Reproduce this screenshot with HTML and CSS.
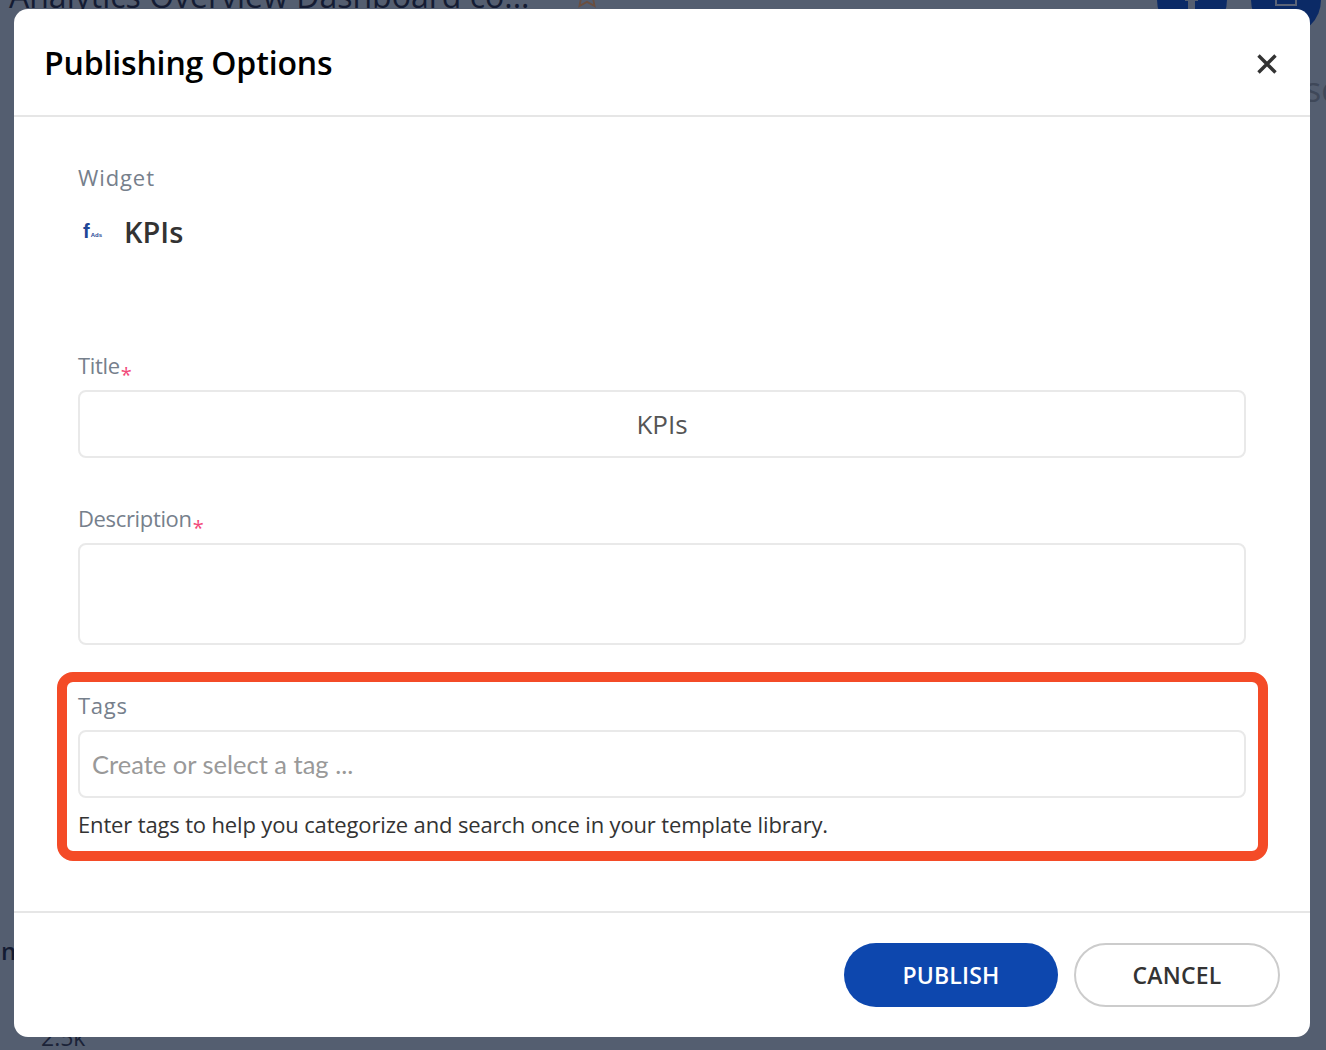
FILE: index.html
```html
<!DOCTYPE html>
<html lang="en">
<head>
<meta charset="utf-8">
<title>Publishing Options</title>
<link rel="stylesheet" href="styles.css">
</head>
<body>
<div class="backdrop">
  <span class="bg-title">Analytics Overview Dashboard co...</span>
  <svg class="bg-star" width="28" height="28" viewBox="0 0 20 20"><path d="M10 1.500l2.600 5.600 6 .7-4.400 4.100 1.200 6-5.400-3-5.400 3 1.200-6L1.400 7.800l6-.7z" fill="none" stroke="#6a4f40" stroke-width="1.300"/></svg>
  <span class="bg-circle bg-circle-a"><span class="glyph-plus"></span></span>
  <span class="bg-circle bg-circle-b"><span class="glyph-box"></span></span>
  <span class="bg-s">sc</span>
  <span class="bg-an">an</span>
  <span class="bg-num">2.5k</span>
</div>
<main class="modal">
  <header class="modal-head">
    <h1 class="modal-title">Publishing Options</h1>
    <svg class="close" width="20" height="20" viewBox="0 0 20 20" aria-label="Close"><path d="M1.500 1.500l17 17M18.500 1.500l-17 17" stroke="#333" stroke-width="3.400" fill="none"/></svg>
  </header>
  <div class="modal-body">
    <div class="widget">
      <div class="label label-widget">Widget</div>
      <div class="widget-row">
        <span class="widget-icon"><span class="icon-f">f</span><span class="icon-ads">Ads</span></span>
        <span class="widget-name">KPIs</span>
      </div>
    </div>
    <div class="field field-title">
      <div class="label">Title<span class="req">*</span></div>
      <div class="input input-center">KPIs</div>
    </div>
    <div class="field field-desc">
      <div class="label">Description<span class="req">*</span></div>
      <div class="input textarea"></div>
    </div>
    <div class="field field-tags">
      <div class="label label-tags">Tags</div>
      <div class="input placeholder">Create or select a tag ...</div>
      <p class="help">Enter tags to help you categorize and search once in your template library.</p>
      <div class="highlight"></div>
    </div>
  </div>
  <footer class="modal-foot">
    <button class="btn btn-primary">PUBLISH</button>
    <button class="btn btn-ghost">CANCEL</button>
  </footer>
</main>
</body>
</html>
```
FILE: styles.css
```css
* { box-sizing: border-box; }
html, body { margin: 0; height: 100%; }
body {
  position: relative;
  width: 1326px;
  height: 1050px;
  overflow: hidden;
  background: #545e70;
  font-family: "Open Sans", "Noto Sans", sans-serif;
}
.backdrop { position: absolute; inset: 0; color: #141c33; }
.backdrop > * { position: absolute; }
.bg-title { left: 9px; top: -24px; font: 32px/40px "Open Sans", sans-serif; white-space: nowrap; }
.bg-star { left: 573px; top: -19px; }
.bg-circle { width: 70px; height: 70px; border-radius: 50%; background: #0b2a66; top: -35px; }
.bg-circle-a { left: 1157px; }
.bg-circle-b { left: 1251px; }
.glyph-plus { position: absolute; left: 31px; top: 25px; width: 7px; height: 24px; background: #545e70; }
.glyph-plus::before { content: ""; position: absolute; left: -3px; top: 9px; width: 13px; height: 2px; background: #545e70; }
.glyph-box { position: absolute; left: 24px; top: 21px; width: 22px; height: 20px; border: 2px solid #5b6478; }
.bg-s { left: 1305px; top: 69px; font: 34px/40px "Open Sans", sans-serif; color: #3f4859; }
.bg-an { left: -13px; top: 936px; font: 600 24px/30px "Open Sans", sans-serif; }
.bg-num { left: 41px; top: 1024px; font: 23px/26px "Open Sans", sans-serif; color: #1b2338; }

.modal {
  position: absolute;
  left: 14px;
  top: 9px;
  width: 1296px;
  height: 1028px;
  background: #fff;
  border-radius: 14px;
  display: flex;
  flex-direction: column;
}
.modal-head {
  height: 108px;
  flex: none;
  border-bottom: 2px solid #e6e6e6;
  padding: 0 33px 0 30px;
  display: flex;
  align-items: center;
  justify-content: space-between;
}
.modal-title { margin: 2px 0 0; font-size: 32px; font-weight: 600; color: #000; letter-spacing: -0.15px; line-height: 40px; }
.close { margin-top: 4px; }
.modal-body { flex: 1; padding: 45px 64px 0; }
.label { font-size: 22px; line-height: 30px; color: #76808c; letter-spacing: -0.35px; }
.label-widget { letter-spacing: 0.9px; }
.label-tags { letter-spacing: 0.7px; }
.req { color: #f2497a; position: relative; top: 8px; margin-left: 1px; font-size: 20px; }
.widget-row { display: flex; align-items: center; height: 30px; margin-top: 24px; }
.widget-icon { width: 46px; display: flex; align-items: baseline; padding-left: 5px; color: #1f4796; font-family: "Liberation Sans", sans-serif; font-weight: 700; }
.icon-f { font-size: 20px; line-height: 22px; }
.icon-ads { font-size: 6px; margin-left: 1px; position: relative; top: -1px; }
.widget-name { font-size: 29px; font-weight: 600; color: #333; }
.field-title { margin-top: 104px; }
.field-desc { margin-top: 45px; }
.field-tags { margin-top: 45px; position: relative; }
.input {
  margin-top: 8px;
  width: 1168px;
  height: 68px;
  border: 2px solid #e9e9e9;
  border-radius: 8px;
  padding: 0 12px;
  display: flex;
  align-items: center;
  font-size: 26px;
  color: #555;
}
.input-center { justify-content: center; }
.textarea { height: 102px; }
.placeholder { margin-top: 10px; font-family: Lato, sans-serif; font-size: 25.500px; color: #999; }
.help { margin: 11px 0 0; font-size: 22px; line-height: 30px; color: #333; letter-spacing: -0.15px; white-space: nowrap; }
.highlight {
  position: absolute;
  left: -21px;
  top: -18px;
  width: 1211px;
  height: 189px;
  border: 10px solid #f44b27;
  border-radius: 16px;
}
.modal-foot {
  height: 126px;
  flex: none;
  border-top: 2px solid #e6e6e6;
  padding: 30px 30px 0 0;
  display: flex;
  justify-content: flex-end;
  gap: 16px;
}
.btn { height: 64px; border-radius: 32px; font-family: "Open Sans", sans-serif; font-size: 23px; font-weight: 600; letter-spacing: 0.2px; }
.btn-primary { width: 214px; background: #0d47ae; border: 0; color: #fff; }
.btn-ghost { width: 206px; background: #fff; border: 2px solid #ccc; color: #333; }
```
